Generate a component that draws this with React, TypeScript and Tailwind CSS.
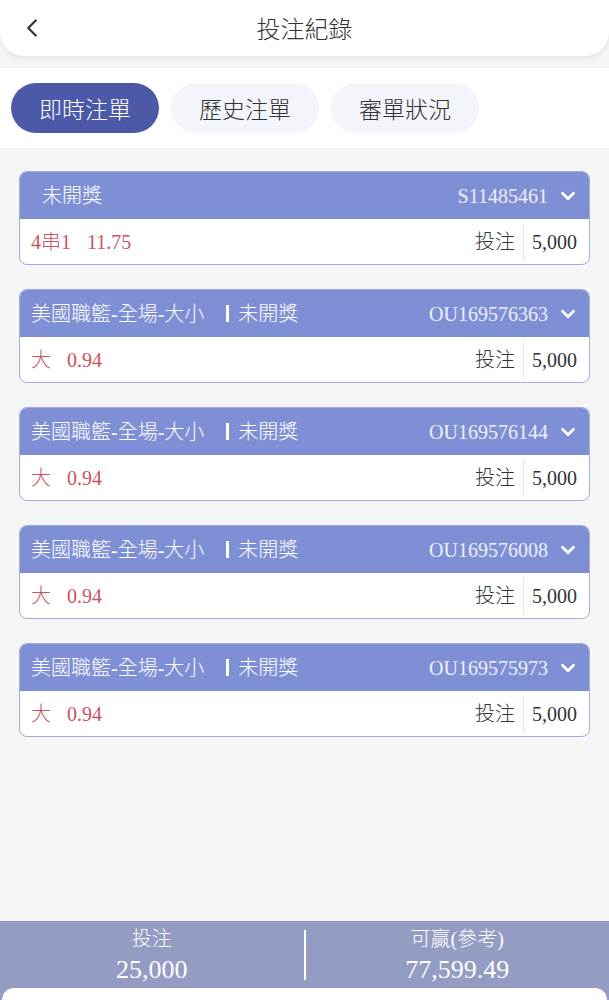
import { ChevronLeft, ChevronDown } from "lucide-react";

const CJK = "font-['Noto_Sans_CJK_TC',sans-serif]";
const MIX = "font-['Liberation_Serif','Noto_Sans_CJK_TC',serif]";

type Bet = {
  league?: string;
  id: string;
  pick: string;
  odds: string;
  stake: string;
};

const bets: Bet[] = [
  { id: "S11485461", pick: "4串1", odds: "11.75", stake: "5,000" },
  { league: "美國職籃-全場-大小", id: "OU169576363", pick: "大", odds: "0.94", stake: "5,000" },
  { league: "美國職籃-全場-大小", id: "OU169576144", pick: "大", odds: "0.94", stake: "5,000" },
  { league: "美國職籃-全場-大小", id: "OU169576008", pick: "大", odds: "0.94", stake: "5,000" },
  { league: "美國職籃-全場-大小", id: "OU169575973", pick: "大", odds: "0.94", stake: "5,000" },
];

const tabs = ["即時注單", "歷史注單", "審單狀況"];

function BetCard({ bet }: { bet: Bet }) {
  return (
    <div className="rounded-[8px] border border-[#a4acd8] overflow-hidden bg-white">
      <div className="h-[47px] bg-[#7f8fd6] flex items-center justify-between pl-[11px] pr-[10px] text-white">
        {bet.league ? (
          <div className={`${MIX} font-light text-[20px] flex items-center`}>
            <span>{bet.league}</span>
            <span className="w-[3px] h-[17px] bg-white ml-[22px] mr-[9px]"></span>
            <span>未開獎</span>
          </div>
        ) : (
          <div className={`${MIX} font-light text-[20px] pl-[11px]`}>未開獎</div>
        )}
        <div className="flex items-center gap-[9px]">
          <span className={`${MIX} text-[20px] text-[#eef0fb]`}>{bet.id}</span>
          <ChevronDown size={22} strokeWidth={3} />
        </div>
      </div>
      <div className="h-[45px] flex items-center justify-between pl-[11px] pr-[12px]">
        <div className={`${MIX} font-light flex items-center text-[#c9545e] text-[20px]`}>
          <span>{bet.pick}</span>
          <span className="ml-[16px]">{bet.odds}</span>
        </div>
        <div className={`${MIX} font-light flex items-center h-full text-[#333] text-[20px]`}>
          <span>投注</span>
          <span className="w-px h-[36px] bg-[#e2e2e2] mx-[8px]"></span>
          <span>{bet.stake}</span>
        </div>
      </div>
    </div>
  );
}

export default function App() {
  return (
    <div className="h-screen w-full bg-[#f5f5f6] flex flex-col">
      <div className="h-[56px] bg-white rounded-b-[24px] shadow-[0_2px_6px_rgba(0,0,0,0.08)] relative flex items-center justify-center">
        <ChevronLeft
          size={30}
          strokeWidth={1.8}
          className="absolute left-[17px] top-[13px] text-[#333]"
        />
        <span className={`${CJK} font-light text-[24px] text-[#333]`}>投注紀錄</span>
      </div>

      <div className="mt-[12px] h-[80px] bg-white flex items-center gap-[12px] pl-[11px]">
        {tabs.map((t, i) => (
          <div
            key={t}
            className={`${CJK} font-light h-[50px] w-[148px] rounded-full flex items-center justify-center text-[23px] ${
              i === 0 ? "bg-[#4b59a8] text-white" : "bg-[#f3f5fa] text-[#333]"
            }`}
          >
            {t}
          </div>
        ))}
      </div>

      <div className="flex-1 px-[19px] pt-[23px] flex flex-col gap-[24px]">
        {bets.map((b) => (
          <BetCard key={b.id} bet={b} />
        ))}
      </div>

      <div className="bg-[#959cc4]">
        <div className="h-[67px] flex items-center text-white">
          <div className="flex-1 flex flex-col items-center">
            <span className={`${MIX} font-light text-[20px] leading-[30px]`}>投注</span>
            <span className={`${MIX} text-[26px] leading-[32px]`}>25,000</span>
          </div>
          <div className="w-[2px] h-[50px] bg-white"></div>
          <div className="flex-1 flex flex-col items-center">
            <span className={`${MIX} font-light text-[20px] leading-[30px]`}>可贏(參考)</span>
            <span className={`${MIX} text-[26px] leading-[32px]`}>77,599.49</span>
          </div>
        </div>
        <div className="h-[12px] bg-white rounded-t-[24px] mx-[2px]"></div>
      </div>
    </div>
  );
}
